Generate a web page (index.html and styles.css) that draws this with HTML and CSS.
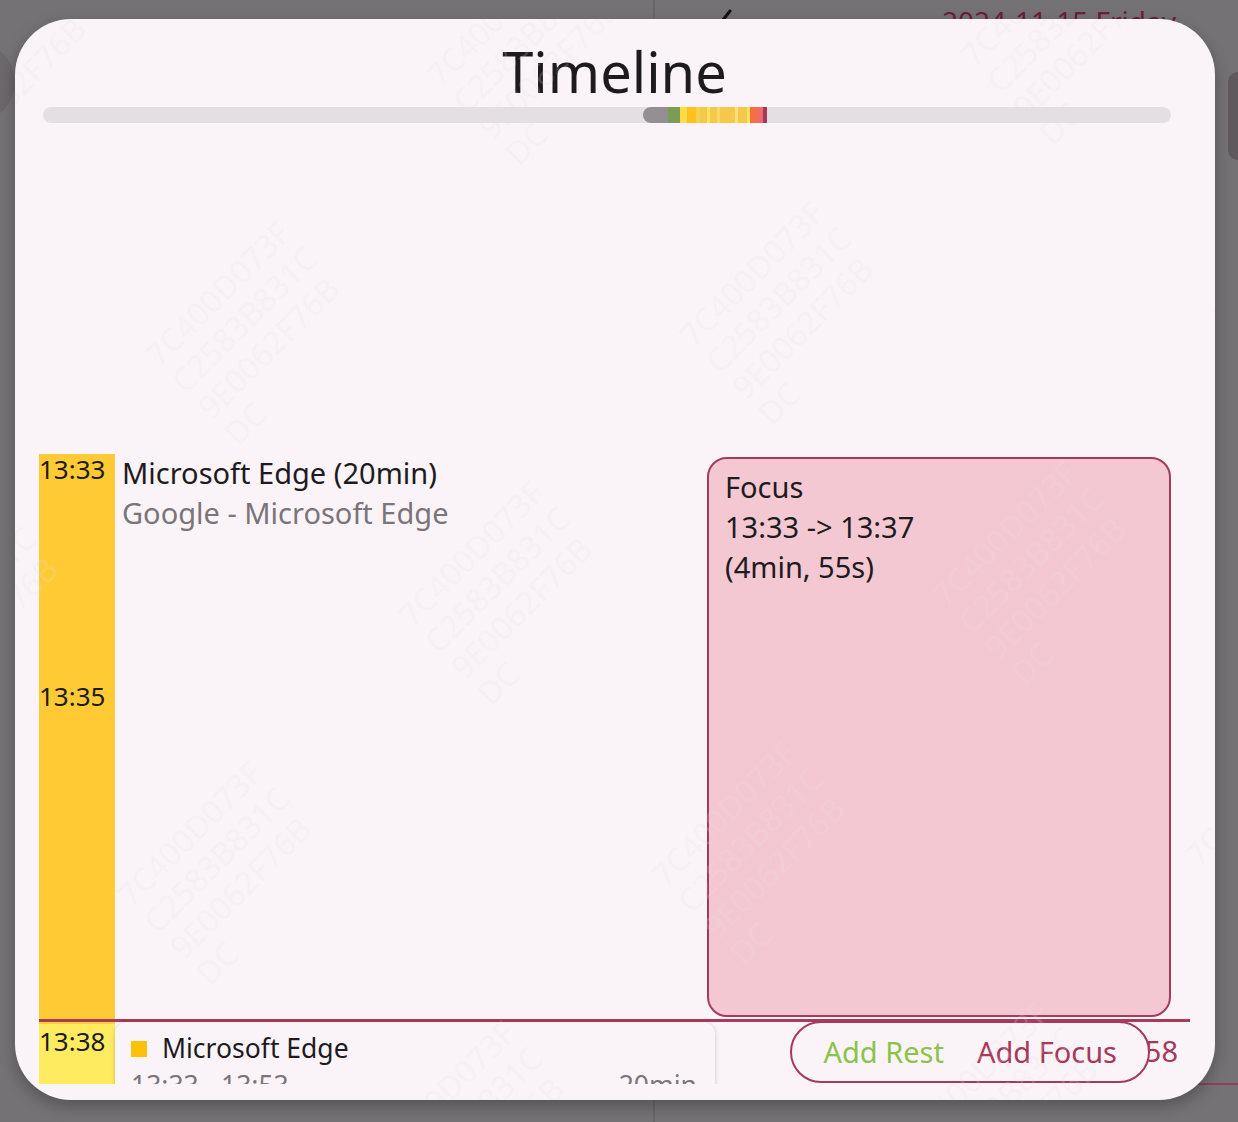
FILE: index.html
```html
<!DOCTYPE html>
<html lang="en">
<head>
<meta charset="utf-8">
<title>Timeline</title>
<link rel="stylesheet" href="styles.css">
</head>
<body>
<div class="app">
  <div class="pane-left">
    <div class="blob"></div>
  </div>
  <div class="pane-right">
    <header class="app-head">
      <svg class="chev" width="22" height="40" viewBox="0 0 22 40"><path d="M19 3 L5 21 L19 39" fill="none" stroke="#141214" stroke-width="3" stroke-linecap="round" stroke-linejoin="round"/></svg>
      <span class="date">2024-11-15 Friday</span>
    </header>
    <div class="side-row"><div class="side-card"></div></div>
    <div class="grow"></div>
    <div class="bottom-rule"></div>
  </div>
</div>

<div class="dialog">
  <h1 class="title">Timeline</h1>
  <div class="track">
    <div class="thumb"></div>
    <div class="seg-green"></div>
    <div class="seg-stripes"></div>
  </div>
  <div class="scroll">
    <div class="hour">
      <div class="time-col">
        <span class="tlabel">13:33</span>
        <span class="tlabel t2">13:35</span>
      </div>
      <div class="event-text">
        <div class="ev-title">Microsoft Edge (20min)</div>
        <div class="ev-sub">Google - Microsoft Edge</div>
      </div>
      <div class="focus">
        <div>Focus</div>
        <div>13:33 -&gt; 13:37</div>
        <div>(4min, 55s)</div>
      </div>
    </div>
    <div class="now-line"></div>
    <div class="next">
      <div class="time-col2"><span class="tlabel">13:38</span></div>
      <div class="card">
        <div class="card-row">
          <span class="sq"></span>
          <span class="card-title">Microsoft Edge</span>
        </div>
        <div class="card-row2">
          <span>13:33 - 13:53</span>
          <span>20min</span>
        </div>
      </div>
      <div class="tail">13:58</div>
      <div class="pill">
        <span class="rest">Add Rest</span>
        <span class="add-focus">Add Focus</span>
      </div>
    </div>
  </div>
  <div class="wm wm1">7C400D073F<br>C2583B831C<br>9E0062F76B<br>DC</div>
  <div class="wm wm2">7C400D073F<br>C2583B831C<br>9E0062F76B<br>DC</div>
  <div class="wm wm3">7C400D073F<br>C2583B831C<br>9E0062F76B<br>DC</div>
  <div class="wm wm4">7C400D073F<br>C2583B831C<br>9E0062F76B<br>DC</div>
  <div class="wm wm5">7C400D073F<br>C2583B831C<br>9E0062F76B<br>DC</div>
  <div class="wm wm6">7C400D073F<br>C2583B831C<br>9E0062F76B<br>DC</div>
  <div class="wm wm7">7C400D073F<br>C2583B831C<br>9E0062F76B<br>DC</div>
  <div class="wm wm8">7C400D073F<br>C2583B831C<br>9E0062F76B<br>DC</div>
  <div class="wm wm9">7C400D073F<br>C2583B831C<br>9E0062F76B<br>DC</div>
  <div class="wm wm10">7C400D073F<br>C2583B831C<br>9E0062F76B<br>DC</div>
  <div class="wm wm11">7C400D073F<br>C2583B831C<br>9E0062F76B<br>DC</div>
  <div class="wm wm12">7C400D073F<br>C2583B831C<br>9E0062F76B<br>DC</div>
  <div class="wm wm13">7C400D073F<br>C2583B831C<br>9E0062F76B<br>DC</div>
  <div class="wm wm14">7C400D073F<br>C2583B831C<br>9E0062F76B<br>DC</div>
  <div class="wm wm15">7C400D073F<br>C2583B831C<br>9E0062F76B<br>DC</div>
</div>
</body>
</html>
```
FILE: styles.css
```css
html, body {
  margin: 0;
  padding: 0;
}
body {
  width: 1238px;
  height: 1122px;
  overflow: hidden;
  background: #757276;
  font-family: "Noto Sans", "Open Sans", sans-serif;
  color: #1d1b1e;
  position: relative;
}

/* dimmed app behind the dialog */
.app {
  display: grid;
  grid-template-columns: 655px 1fr;
  height: 1122px;
}
.pane-left {
  border-right: 2px solid #69666a;
  padding-top: 42px;
  overflow: hidden;
}
.blob {
  width: 80px;
  height: 80px;
  margin-left: -65px;
  border-radius: 50%;
  background: #6c686c;
}
.pane-right {
  display: flex;
  flex-direction: column;
  overflow: hidden;
}
.app-head {
  height: 72px;
  display: flex;
  align-items: flex-start;
}
.chev {
  margin-left: 56px;
  margin-top: 8px;
}
.date {
  margin-left: auto;
  margin-right: 62px;
  font-size: 28px;
  line-height: 40px;
  margin-top: 1px;
  color: #6a2136;
}
.side-row {
  height: 88px;
  display: flex;
  justify-content: flex-end;
}
.side-card {
  width: 10px;
  background: #5f585c;
  border-radius: 10px 0 0 10px;
}
.grow { flex: 1; }
.bottom-rule {
  height: 2px;
  background: #8c4459;
  margin-bottom: 37px;
}

/* dialog */
.dialog {
  position: absolute;
  left: 15px;
  top: 19px;
  width: 1200px;
  height: 1081px;
  box-sizing: border-box;
  padding: 20px 25px 16px 24px;
  background: #faf4f8;
  border-radius: 56px;
  box-shadow: 0 6px 16px rgba(0, 0, 0, 0.28);
  display: flex;
  flex-direction: column;
  overflow: hidden;
}
.title {
  margin: 0 0 4px;
  font-size: 56px;
  line-height: 64px;
  font-weight: 400;
  text-align: center;
  color: #1d1b1e;
}
.track {
  height: 16px;
  margin: 0 19px 0 4px;
  border-radius: 8px;
  background: #e4dfe3;
  display: flex;
  flex-shrink: 0;
}
.thumb {
  margin-left: 600px;
  width: 25px;
  border-radius: 8px 0 0 8px;
  background: #938f93;
}
.seg-green {
  width: 12px;
  background: #7a9c55;
}
.seg-stripes {
  width: 87px;
  background: linear-gradient(to right,
    #ffdb45 0, #ffdb45 7px,
    #ffc21a 7px, #ffc21a 16px,
    #f8d050 16px, #f8d050 20px,
    #f5c84a 20px, #f5c84a 27px,
    #fde25a 27px, #fde25a 30px,
    #f5c84a 30px, #f5c84a 37px,
    #f8d860 37px, #f8d860 40px,
    #f5c84a 40px, #f5c84a 55px,
    #f6e27a 55px, #f6e27a 58px,
    #f5c84a 58px, #f5c84a 67px,
    #fde25a 67px, #fde25a 70px,
    #f47040 70px, #f47040 77px,
    #ee6b6b 77px, #ee6b6b 83px,
    #a8385a 83px, #a8385a 87px);
}

.scroll {
  flex: 1;
  min-height: 0;
  overflow: hidden;
}
.hour {
  margin-top: 331px;
  height: 565px;
  display: grid;
  grid-template-columns: 76px 1fr 464px;
  padding-right: 19px;
}
.time-col {
  background: #ffca33;
  display: flex;
  flex-direction: column;
  align-items: flex-start;
}
.tlabel {
  font-size: 26px;
  line-height: 30px;
  color: #1d1b1e;
}
.t2 {
  margin-top: 197px;
}
.event-text {
  padding-left: 7px;
  font-size: 29px;
}
.ev-title {
  line-height: 38px;
  color: #1d1b1e;
}
.ev-sub {
  line-height: 42px;
  color: #7a757a;
}
.focus {
  margin-top: 3px;
  height: 560px;
  box-sizing: border-box;
  border: 2px solid #a53a5d;
  border-radius: 20px;
  background: #f4c8d2;
  padding: 8px 16px;
  font-size: 29px;
  line-height: 40px;
  color: #1d1b1e;
}
.now-line {
  height: 3px;
  background: #a83a5a;
}
.next {
  position: relative;
  height: 120px;
  display: grid;
  grid-template-columns: 76px 600px 1fr;
}
.time-col2 {
  background: #ffeb60;
  border-top: 2px solid #ffcd3a;
  padding-top: 2px;
}
.card {
  background: #faf4f8;
  border-radius: 12px;
  box-shadow: 0 1px 4px rgba(0, 0, 0, 0.2);
  padding: 10px 18px 0 16px;
  font-size: 26.5px;
}
.card-row {
  display: flex;
  align-items: center;
  gap: 15px;
  height: 32px;
}
.sq {
  width: 16px;
  height: 16px;
  margin-top: 1px;
  background: #ffc107;
}
.card-title {
  line-height: 32px;
  color: #1d1b1e;
}
.card-row2 {
  margin-top: 5px;
  display: flex;
  justify-content: space-between;
  line-height: 32px;
  color: #7a757a;
}
.tail {
  text-align: right;
  padding: 9px 12px 0 0;
  font-size: 29px;
  line-height: 40px;
  color: #a8385a;
}
.pill {
  position: absolute;
  right: 40px;
  top: -1px;
  height: 62px;
  box-sizing: border-box;
  border: 2px solid #a8385a;
  border-radius: 31px;
  background: #faf4f8;
  display: flex;
  align-items: center;
  gap: 33px;
  padding: 0 31px;
  font-size: 29px;
  line-height: 40px;
}
.rest { color: #8bc34a; }
.add-focus { color: #a8385a; }

/* watermark */
.wm {
  position: absolute;
  width: 190px;
  height: 148px;
  font-size: 32px;
  line-height: 37px;
  white-space: nowrap;
  color: rgba(232, 226, 232, 0.2);
  transform: rotate(-45deg);
  pointer-events: none;
}
.wm1 { left: -106px; top: -21px; }
.wm2 { left: 428px; top: -41px; }
.wm3 { left: 962px; top: -61px; }
.wm4 { left: 147px; top: 239px; }
.wm5 { left: 681px; top: 219px; }
.wm6 { left: 1215px; top: 199px; }
.wm7 { left: -134px; top: 519px; }
.wm8 { left: 400px; top: 499px; }
.wm9 { left: 934px; top: 479px; }
.wm10 { left: 119px; top: 779px; }
.wm11 { left: 653px; top: 759px; }
.wm12 { left: 1187px; top: 739px; }
.wm13 { left: -162px; top: 1059px; }
.wm14 { left: 372px; top: 1039px; }
.wm15 { left: 906px; top: 1019px; }
```
